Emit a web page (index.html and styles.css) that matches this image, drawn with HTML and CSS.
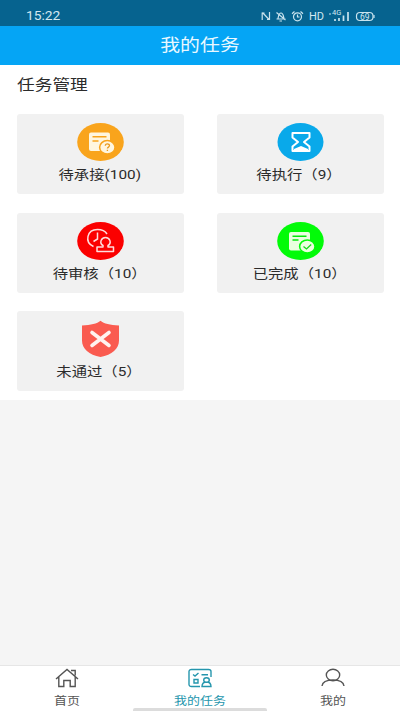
FILE: index.html
```html
<!DOCTYPE html>
<html lang="zh-CN">
<head>
<meta charset="utf-8">
<title>我的任务</title>
<link rel="stylesheet" href="styles.css">
</head>
<body>
<div class="app">
  <div class="status">
    <span class="time">15:22</span>
    <div class="status-icons">
      <svg width="114" height="14" viewBox="0 0 114 14" fill="none" stroke="#c9e3ee" stroke-width="1.2">
        <path d="M3.500 4H1.200v7M1.500 3.500l6.500 7M8.500 3v7.500H6"/>
        <path d="M15.500 10h9M17 9.500c.6-3 .8-5.500 3-5.500s2.300 2.500 3 5.500M18.500 12h2.500M15.500 3.500l9 7.500"/>
        <circle cx="36.500" cy="7.800" r="4"/><path d="M36.500 5.500v2.500h2M31 4.800l2.500-2.300M42 4.800l-2.500-2.300"/>
        <path d="M74 10v2M78 9v3M82.500 6.500V12M87 3v9" stroke-width="1.700"/>
        <path d="M68 5h2"/>
        <rect x="95.500" y="3.500" width="16.500" height="8" rx="3.500"/><path d="M113 6v3"/>
      </svg>
      <span class="hd">HD</span><span class="net">4G</span>
      <span class="battery">69</span>
    </div>
  </div>
  <header class="header"><span>我的任务</span></header>
  <main class="panel">
    <h1 class="heading"><span>任务管理</span></h1>
    <div class="grid">
      <div class="card">
        <svg class="icon" viewBox="0 0 47 38"><ellipse cx="23.500" cy="19" rx="23.300" ry="19" fill="#f9a41c"/>
          <rect x="12" y="9.500" width="21" height="18.500" rx="2" fill="#fff6df"/>
          <path d="M15.500 13.800h14M15.500 18h6" stroke="#f9a41c" stroke-width="1.400"/>
          <ellipse cx="30.300" cy="24.300" rx="7.700" ry="6.700" fill="#fff6df" stroke="#f9a41c" stroke-width="1.500"/>
          <path d="M28.300 22.800c0-2.500 4.200-2.400 4.200-.2 0 1.500-2.100 1.500-2.100 3M30.400 26.800V28" fill="none" stroke="#e99b20" stroke-width="1.300"/></svg>
        <span class="label">待承接(100)</span>
      </div>
      <div class="card">
        <svg class="icon" viewBox="0 0 47 38"><ellipse cx="23.500" cy="19" rx="23" ry="19" fill="#09a9ea"/>
          <path d="M15.500 10h17v4.500L27 19l5.500 4.500V28h-17v-4.500L21 19l-5.500-4.500z" fill="none" stroke="#fff" stroke-width="2" stroke-linejoin="round"/>
          <path d="M17 26l7-3 7 3v2H17z" fill="#fff"/></svg>
        <span class="label">待执行（9）</span>
      </div>
      <div class="card">
        <svg class="icon" viewBox="0 0 47 38"><ellipse cx="23.500" cy="19" rx="23.300" ry="19" fill="#fb0000"/>
          <g fill="none" stroke="#ffdcdc" stroke-width="1.500"><path d="M16.500 24.500C7 20 10 7.500 20.500 7.500c4.500 0 8 2 9.500 4.500M20.500 10.500v6.500l-4 2.500"/>
          <path d="M26 23.500c-4-2.300-2-8 2.500-8s6.500 5.700 2.500 8V25h5.500v4.500h-16.500V25H26z" stroke-linejoin="round"/></g></svg>
        <span class="label">待审核（10）</span>
      </div>
      <div class="card">
        <svg class="icon" viewBox="0 0 47 38"><ellipse cx="23.500" cy="19" rx="23.300" ry="19" fill="#02fb08"/>
          <rect x="12" y="10" width="21" height="18.500" rx="2" fill="#eaffdf"/>
          <path d="M15.500 14.200h14M15.500 18h6" stroke="#02e808" stroke-width="1.400"/>
          <ellipse cx="30.300" cy="24.500" rx="7.700" ry="6.600" fill="#eaffdf" stroke="#02fb08" stroke-width="1.500"/>
          <path d="M26.500 24.500l3 2.400 4.700-4.300" fill="none" stroke="#15d81b" stroke-width="1.300"/></svg>
        <span class="label">已完成（10）</span>
      </div>
      <div class="card">
        <svg class="icon" viewBox="0 0 47 38"><path d="M23.500.8C27 3.700 33 5 42 5.500v15c0 8-7 14.500-18.500 16.500C12 35 5 28.500 5 20.500v-15C14 5 20 3.700 23.500.8z" fill="#fa5b50"/>
          <path d="M15 12.500l17 13M32 12.500l-17 13" stroke="#fff3ef" stroke-width="3.600" stroke-linecap="round"/></svg>
        <span class="label">未通过（5）</span>
      </div>
    </div>
  </main>
  <nav class="tabs">
    <div class="tab">
      <svg class="tab-icon" viewBox="0 0 24 20"><path d="M1 11L12 1.500 23 11M3.800 9v9.500h5v-6h6.400v6h5V9M16 2.500h4.200v5"/></svg>
      <span>首页</span>
    </div>
    <div class="tab active">
      <svg class="tab-icon" viewBox="0 0 24 20"><path d="M12 18.500H3.500c-1.500 0-2.500-.8-2.500-2V3.500c0-1.200 1-2 2.500-2h17c1.500 0 2.500.8 2.500 2V9M5 6.500l2 1.500 3.500-3M13.500 6.700h6.500M6 11.500h4v3.500H6zM14 18.500c0-3.500 1.600-4.500 4.500-4.500s4.500 1 4.500 4.500z"/><ellipse cx="18.500" cy="12" rx="2.800" ry="2.300" fill="#fff"/></svg>
      <span>我的任务</span>
    </div>
    <div class="tab">
      <svg class="tab-icon" viewBox="0 0 24 20"><ellipse cx="12" cy="7" rx="6.700" ry="5.700"/><path d="M1 18c.5-4 5-6 11-6s10.500 2 11 6"/></svg>
      <span>我的</span>
    </div>
  </nav>
  <div class="home-bar"></div>
</div>
</body>
</html>
```
FILE: styles.css
```css
* { box-sizing: border-box; }
body {
  margin: 0;
  font-family: Roboto, "Noto Sans CJK SC", sans-serif;
  color: #2b2b2b;
}
.app {
  position: relative;
  height: 711px;
  display: flex;
  flex-direction: column;
  background: #f5f5f5;
  overflow: hidden;
}
.status {
  height: 26px;
  flex: none;
  display: flex;
  justify-content: space-between;
  padding: 9px 25px 0 26px;
  background: #06638f;
  color: #d3e8f1;
}
.time {
  font-size: 12px;
  line-height: 15px;
  transform: scaleX(1.15);
  transform-origin: left;
}
.status-icons {
  position: relative;
  width: 114px;
  height: 14px;
}
.status-icons svg { display: block; overflow: visible; }
.hd, .net, .battery {
  position: absolute;
  line-height: 14px;
}
.hd { left: 48px; top: 0.5px; font-size: 11px; }
.net { left: 71px; top: -3px; font-size: 7.5px; }
.battery { left: 99px; top: 0.5px; font-size: 8.5px; }
.header {
  height: 39px;
  flex: none;
  display: flex;
  justify-content: center;
  align-items: center;
  padding-bottom: 4px;
  background: #05a5f5;
  color: #e9f8ff;
  font-size: 17px;
}
.header span { transform: scaleX(1.17); }
.panel {
  height: 335px;
  flex: none;
  padding: 9px 16px 0 17px;
  background: #fff;
}
.heading {
  margin: 0;
  height: 40px;
  font-size: 15px;
  font-weight: 400;
  line-height: 23px;
}
.heading span {
  display: inline-block;
  transform: scaleX(1.18);
  transform-origin: left;
}
.grid {
  display: grid;
  grid-template-columns: 167px 167px;
  grid-auto-rows: 80px;
  gap: 18.5px 33px;
}
.card {
  display: flex;
  flex-direction: column;
  align-items: center;
  padding-top: 9px;
  border-radius: 3px;
  background: #f1f1f1;
}
.icon { width: 47px; height: 38px; flex: none; }
.label {
  margin-top: 4px;
  padding-right: 2px;
  font-size: 13px;
  line-height: 20px;
  white-space: nowrap;
  transform: scaleX(1.18);
}
.tabs {
  margin-top: auto;
  height: 46px;
  flex: none;
  display: grid;
  grid-template-columns: repeat(3, 1fr);
  border-top: 1px solid #e6e6e6;
  background: #fff;
}
.tab {
  display: flex;
  flex-direction: column;
  align-items: center;
  padding-top: 2px;
  color: #555;
  font-size: 11px;
  line-height: 16px;
}
.tab span { margin-top: 6px; transform: scaleX(1.18); }
.tab.active { color: #2596ad; }
.tab-icon {
  width: 24px;
  height: 20px;
  fill: none;
  stroke: currentColor;
  stroke-width: 1.4;
}
.home-bar {
  position: absolute;
  left: 133px;
  bottom: 0;
  width: 134px;
  height: 3px;
  border-radius: 2px 2px 0 0;
  background: #dcdcdc;
}
```
